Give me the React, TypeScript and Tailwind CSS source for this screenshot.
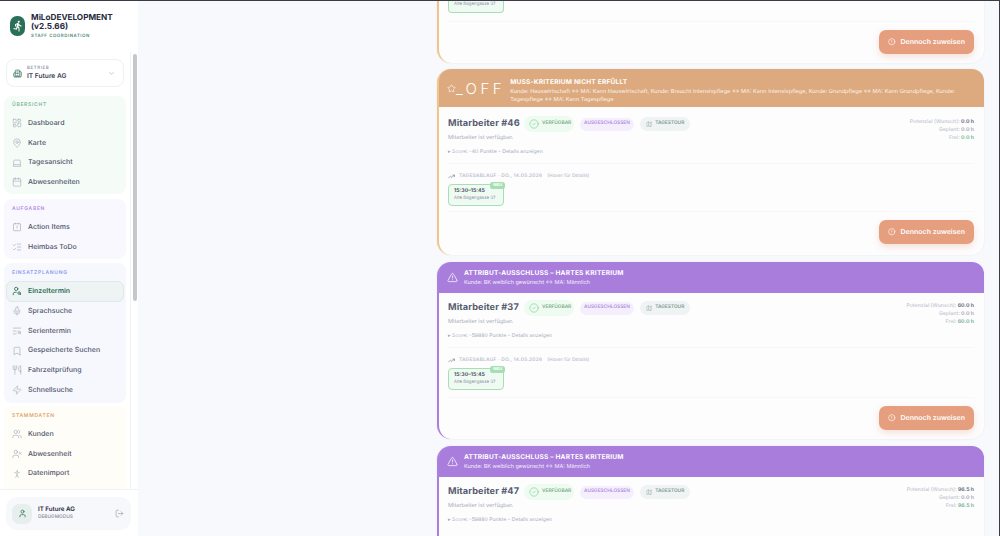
import React from "react";
import { LayoutDashboard, MapPin, Calendar, ListChecks, UserSearch, Mic, TextSearch, Bookmark, Utensils, Zap, Users, UserX, User, LogOut, ChevronDown, Building2, CircleCheck, Map, TrendingUp, TriangleAlert, Star, CircleAlert, PersonStanding, Laptop } from "lucide-react";
import { MdDirectionsRun } from "react-icons/md";

const F = { fontFamily: '"Inter","Liberation Sans",sans-serif' };

function ActionIcon({ size, className }: { size: number; strokeWidth?: number; className?: string }) {
  return (
    <svg width={size} height={size} viewBox="0 0 24 24" fill="none" stroke="currentColor" strokeWidth={1.6} className={className}>
      <rect x="3.5" y="4" width="17" height="17" rx="1.5" />
      <path d="M8 2v4M16 2v4M12 9v6M12 17.5v.5" />
    </svg>
  );
}

type It = { l: string; I: any; a?: boolean };
function Section({ title, bg, tc, items, cls, head }: { title: string; bg: string; tc: string; items: It[]; cls: string; head: string }) {
  return (
    <div className={`rounded-[8px] ${bg} ${cls}`}>
      <div className={`pl-[8px] text-[5px] leading-[6px] font-semibold tracking-[0.7px] uppercase ${head} ${tc}`}>{title}</div>
      <div className="flex flex-col">
        {items.map((it) => (
          <div key={it.l} className={`flex items-center gap-[6px] text-[7px] font-medium ${it.a ? "mx-[2px] pl-[5px] h-[21px] rounded-[6px] bg-[#eef3f4] border border-[#dfe8ea] text-[#2f6f5a] font-semibold" : "h-[19.7px] pl-[8px] text-[#4f566a]"}`}>
            <it.I size={10} strokeWidth={it.a ? 2 : 1.5} className={it.a ? "text-[#2f6f5a]" : "text-[#a3a9b6]"} />
            <span>{it.l}</span>
          </div>
        ))}
      </div>
    </div>
  );
}

function Sidebar() {
  return (
    <aside className="w-[138px] shrink-0 h-full bg-white flex flex-col relative">
      <div className="h-[51px] shrink-0 flex items-start pl-[10px] pt-[12px] gap-[6px]">
        <div className="w-[15px] h-[20px] mt-[3px] rounded-[7px] bg-[#2a7059] flex items-center justify-center text-white shrink-0">
          <MdDirectionsRun size={12} />
        </div>
        <div className="flex flex-col">
          <div className="text-[8.2px] leading-[9.2px] font-bold text-[#262b3d] w-[90px]">MiLoDEVELOPMENT (v2.5.66)</div>
          <div className="text-[4.4px] mt-[3px] font-semibold tracking-[0.55px] text-[#4f8a76]">STAFF COORDINATION</div>
        </div>
      </div>
      <div className="flex-1 flex min-h-0">
        <div className="w-[131px] overflow-hidden px-[4px] border-r border-[#f1f2f5]">
          <div className="mx-[2px] mt-[7px] h-[28px] rounded-[8px] border border-[#eff0f3] flex items-center pl-[6px] pr-[8px]">
            <Building2 size={9} className="text-[#2f6f5a]" strokeWidth={2} />
            <div className="ml-[5px] flex-1">
              <div className="text-[4.4px] leading-[6px] font-medium tracking-[0.6px] text-[#858b9b]">BETRIEB</div>
              <div className="text-[6.6px] leading-[9px] font-semibold text-[#3a4053]">IT Future AG</div>
            </div>
            <ChevronDown size={7} className="text-[#9ca2b0]" />
          </div>
          <div className="h-[9px]" />
          <Section cls="h-[98px]" head="h-[17.5px] pt-[6px]" title="Übersicht" bg="bg-[#f5fcf8]" tc="text-[#7ab99b]" items={[{ l: "Dashboard", I: LayoutDashboard }, { l: "Karte", I: MapPin }, { l: "Tagesansicht", I: Laptop }, { l: "Abwesenheiten", I: Calendar }]} />
          <div className="h-[5px]" />
          <Section cls="h-[60px]" head="h-[18.5px] pt-[7px]" title="Aufgaben" bg="bg-[#faf8ff]" tc="text-[#b88ce8]" items={[{ l: "Action Items", I: ActionIcon }, { l: "Heimbas ToDo", I: ListChecks }]} />
          <div className="h-[4px]" />
          <Section cls="h-[140px]" head="h-[17.5px] pt-[7px]" title="Einsatzplanung" bg="bg-[#f7f8fe]" tc="text-[#8d9cec]" items={[{ l: "Einzeltermin", I: UserSearch, a: true }, { l: "Sprachsuche", I: Mic }, { l: "Serientermin", I: TextSearch }, { l: "Gespeicherte Suchen", I: Bookmark }, { l: "Fahrzeitprüfung", I: Utensils }, { l: "Schnellsuche", I: Zap }]} />
          <div className="h-[3px]" />
          <Section cls="h-[100px]" head="h-[18.5px] pt-[7px]" title="Stammdaten" bg="bg-[#fffdf8]" tc="text-[#e0a56a]" items={[{ l: "Kunden", I: Users }, { l: "Abwesenheit", I: UserX }, { l: "Datenimport", I: PersonStanding }]} />
        </div>
      </div>
      <div className="h-[47px] bg-white border-t border-[#f1f2f5] pt-[7px] pl-[6px] pr-[7px] shrink-0">
        <div className="h-[33px] rounded-[11px] bg-[#f7f8fb] flex items-center pl-[6px] pr-[7px]">
          <div className="w-[20px] h-[20px] rounded-[7px] bg-[#e6efec] flex items-center justify-center text-[#2f6f5a]"><User size={9} strokeWidth={2} /></div>
          <div className="ml-[6px] flex-1">
            <div className="text-[6.2px] leading-[8px] font-semibold text-[#262b3d]">IT Future AG</div>
            <div className="text-[4.8px] leading-[7px] font-medium text-[#858b9b]">DEBUGMODUS</div>
          </div>
          <LogOut size={9} className="text-[#8b91a0]" strokeWidth={1.5} />
        </div>
      </div>
      <div className="absolute left-[133px] top-[53px] w-[4px] h-[247px] rounded-full bg-[#c6c7cc]" />
    </aside>
  );
}

function Slot() {
  return (
    <div className="relative flex flex-col justify-center w-[56px] h-[22px] rounded-[4px] border border-[#a6dfb4] bg-[#effbf2] pl-[5px]">
      <div className="text-[5.2px] leading-[8px] font-bold text-[#4d5365]">15:30–15:45</div>
      <div className="text-[4.4px] leading-[8px] text-[#8d93a2] whitespace-nowrap">Alte Bogengasse 37</div>
      <div className="absolute right-[-2px] top-[-3px] h-[7px] px-[3px] rounded-[2.5px] bg-[#a6dfb4] text-white text-[4.2px] leading-[7px] font-bold">NEU</div>
    </div>
  );
}

function Timeline() {
  return (
    <div className="pt-[8px] border-t border-[#f6f7f9]">
      <div className="flex items-center text-[4.8px] leading-[7px] text-[#bcc1cc] font-medium h-[7px] translate-y-[1px]">
        <TrendingUp size={7} className="text-[#6d7385] mr-[4px]" />
        <span className="tracking-[0.25px] font-semibold">TAGESABLAUF · DO., 14.05.2026</span>
        <span className="ml-[5px]">(Hover für Details)</span>
      </div>
      <div className="mt-[5px]"><Slot /></div>
    </div>
  );
}

function Btn() {
  return (
    <div className="flex justify-end pt-[8px] border-t border-[#f6f7f9]">
      <div className="w-[95px] h-[24px] rounded-[7px] bg-[#e59e7e] shadow-[0_3px_7px_rgba(229,158,126,0.3)] flex items-center justify-center gap-[5px] text-white text-[7px] font-semibold">
        <CircleAlert size={7.5} /> Dennoch zuweisen
      </div>
    </div>
  );
}

function Info({ name, p, fr, score }: { name: string; p: string; fr: string; score: string }) {
  return (
    <div className="flex justify-between">
      <div>
        <div className="flex items-center h-[16px]">
          <div className="text-[9.2px] font-bold tracking-[0.1px] text-[#565c6e] w-[76px] whitespace-nowrap">{name}</div>
          <div className="w-[50px] h-[16px] rounded-full bg-[#eefbf1] flex items-center pl-[5px] gap-[3px] text-[4.8px] font-semibold text-[#7eac8d]">
            <CircleCheck size={10} strokeWidth={1.2} className="text-[#6fbd82]" /> VERFÜGBAR
          </div>
          <div className="ml-[6px] w-[54px] h-[13px] rounded-full bg-[#f5effd] flex items-center justify-center text-[4.8px] font-semibold text-[#b08fe0]">AUSGESCHLOSSEN</div>
          <div className="ml-[6px] w-[50px] h-[14px] rounded-full bg-[#f0f3f3] flex items-center justify-center gap-[3px] text-[4.8px] font-semibold text-[#7d9a92]">
            <Map size={6.5} strokeWidth={1.3} /> TAGESTOUR
          </div>
        </div>
        <div className="text-[5.6px] leading-[8px] mt-[2px] text-[#a8adb9]">Mitarbeiter ist verfügbar.</div>
        <div className="text-[5.2px] leading-[8px] mt-[6px] text-[#a8adb9]">▸ Score: {score} – Details anzeigen</div>
      </div>
      <div className="text-right text-[5.2px] leading-[8px] pt-[1.5px] text-[#c0c4ce] font-medium">
        <div>Potenzial (Wunsch): <b className="text-[#6a7080] font-bold">{p}</b></div>
        <div>Geplant: <b className="font-bold text-[#a9aeba]">0.0 h</b></div>
        <div>Frei: <b className="text-[#7eb59b] font-bold">{fr}</b></div>
      </div>
    </div>
  );
}

function Purple({ name, p, fr, score, last }: { name: string; p: string; fr: string; score: string; last?: boolean }) {
  return (
    <div className={`rounded-t-[14px] border-l-2 border-[#ab7fdd] bg-[#fdfdfe] shadow-[0_0_2px_rgba(30,40,80,0.08)] ${last ? "h-[110px]" : "rounded-b-[14px] h-[177px]"}`}>
      <div className="h-[31px] rounded-t-[12px] bg-[#a97ddc] flex items-center pl-[8px] text-white">
        <TriangleAlert size={11} strokeWidth={1.6} />
        <div className="ml-[6px]">
          <div className="text-[6.6px] leading-[10px] font-bold tracking-[0.2px]">ATTRIBUT-AUSSCHLUSS – HARTES KRITERIUM</div>
          <div className="text-[5.5px] leading-[9px] mt-[1px] text-[#f3ebfb]">Kunde: BK weiblich gewünscht ↔ MA: Männlich</div>
        </div>
      </div>
      <div className="pl-[9px] pr-[10px] pt-[7px]">
        <Info name={name} p={p} fr={fr} score={score} />
        {!last && (
          <>
            <div className="h-[7px]" />
            <Timeline />
            <div className="h-[7px]" />
            <Btn />
          </>
        )}
      </div>
    </div>
  );
}

export default function App() {
  return (
    <div style={F} className="w-[1000px] h-[536px] overflow-hidden flex bg-[#f8f9fc] border-t border-[#3b3b48] border-r antialiased [text-rendering:geometricPrecision]">
      <Sidebar />
      <main className="flex-1 min-w-0 h-full overflow-hidden pl-[299px] pr-[15px]">
        <div className="rounded-b-[14px] border-l-2 border-[#f0c48a] bg-[#fdfdfe] shadow-[0_0_2px_rgba(30,40,80,0.08)] pl-[9px] pr-[10px] h-[62px]">
          <div className="w-[56px] h-[12px] mb-[8px] rounded-b-[4px] border border-t-0 border-[#a6dfb4] bg-[#effbf2] pl-[5px] text-[4.4px] leading-[7px] text-[#8d93a2]">Alte Bogengasse 37</div>
          <Btn />
        </div>
        <div className="h-[6px]" />
        <div className="rounded-[14px] border-l-2 border-[#f0c48a] bg-[#fdfdfe] shadow-[0_0_2px_rgba(30,40,80,0.08)] h-[186px]">
          <div className="h-[38px] rounded-t-[12px] bg-[#dcaa7e] flex items-center pl-[8px] text-white">
            <Star size={9} strokeWidth={1.6} />
            <span className="text-[15px] font-light tracking-[3.5px] mt-[2px]">_OFF</span>
            <div className="ml-[5px] flex-1 pr-[20px] pt-[5px]">
              <div className="text-[6.6px] leading-[9px] font-bold tracking-[0.2px]">MUSS-KRITERIUM NICHT ERFÜLLT</div>
              <div className="text-[5.6px] leading-[8px] mt-[1px] text-[#fbf1e8]">Kunde: Hauswirtschaft ↔ MA: Kann Hauswirtschaft, Kunde: Braucht Intensivpflege ↔ MA: Kann Intensivpflege, Kunde: Grundpflege ↔ MA: Kann Grundpflege, Kunde: Tagespflege ↔ MA: Kann Tagespflege</div>
            </div>
          </div>
          <div className="pl-[9px] pr-[10px] pt-[9px]">
            <Info name="Mitarbeiter #46" p="0.0 h" fr="0.0 h" score="-40 Punkte" />
            <div className="h-[7px]" />
            <Timeline />
            <div className="h-[5px]" />
            <Btn />
          </div>
        </div>
        <div className="h-[7px]" />
        <Purple name="Mitarbeiter #37" p="60.0 h" fr="60.0 h" score="-59880 Punkte" />
        <div className="h-[7px]" />
        <Purple name="Mitarbeiter #47" p="96.5 h" fr="96.5 h" score="-59880 Punkte" last />
      </main>
    </div>
  );
}
